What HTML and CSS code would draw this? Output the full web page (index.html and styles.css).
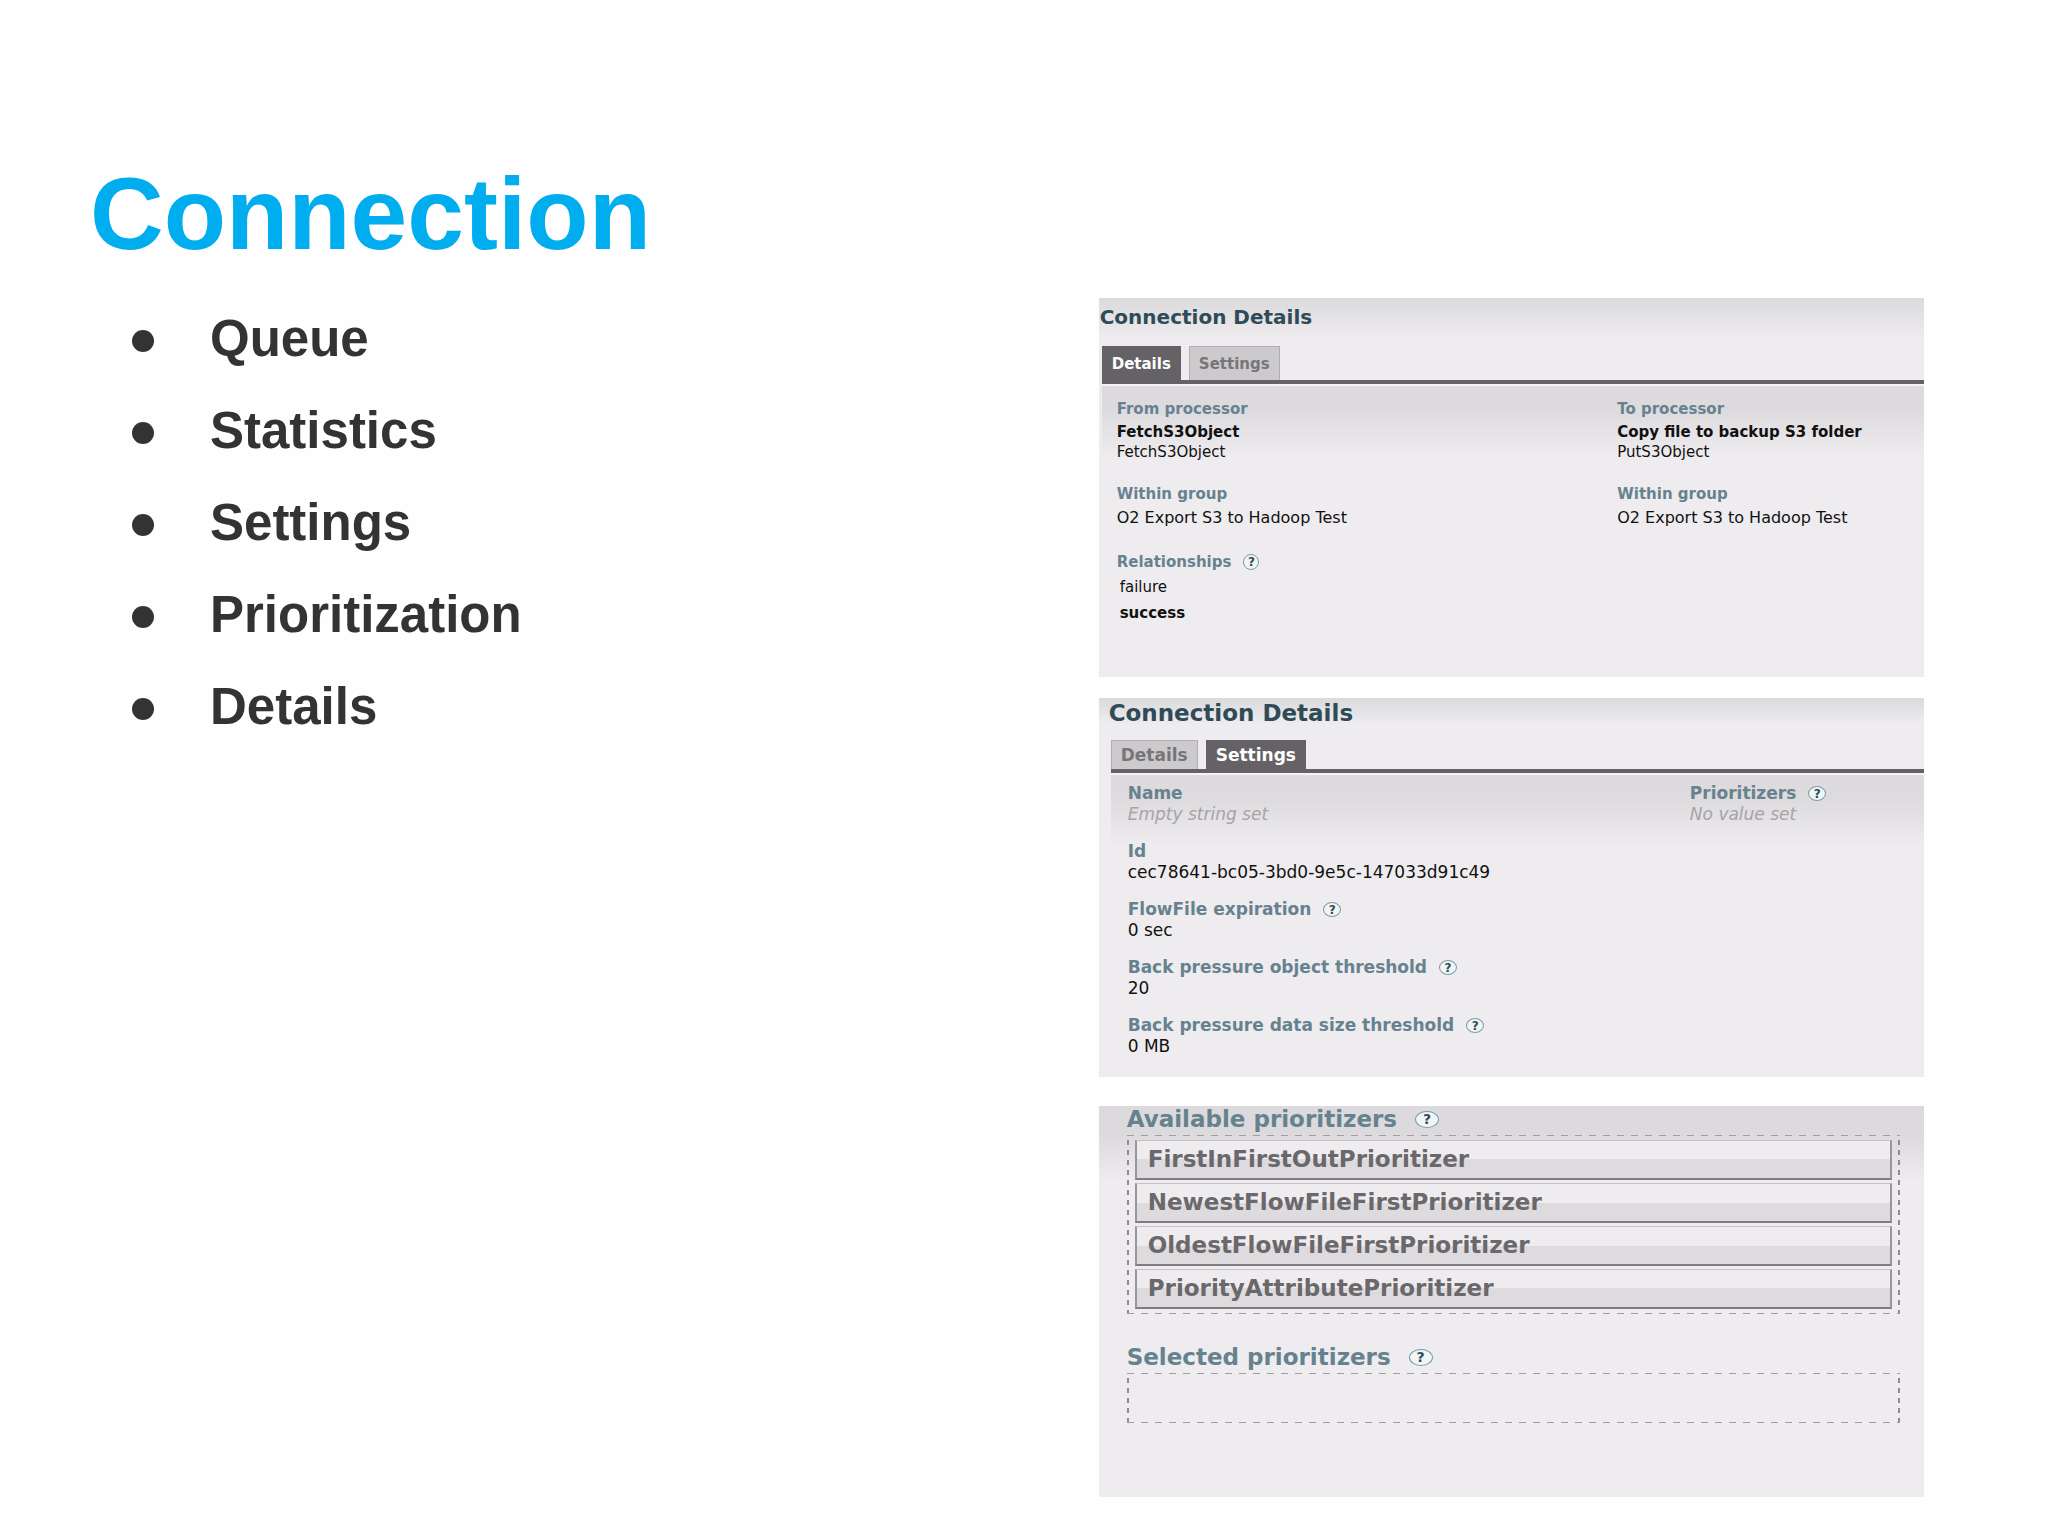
FILE: index.html
```html
<!DOCTYPE html>
<html lang="en">
<head>
    <meta charset="UTF-8">
    <meta name="viewport" content="width=device-width, initial-scale=1.0">
    <title>Connection</title>
    <link rel="stylesheet" href="styles.css">
</head>
<body>
    <h1>Connection</h1>

    <main class="slide">
        <ul class="topics">
            <li>Queue</li>
            <li>Statistics</li>
            <li>Settings</li>
            <li>Prioritization</li>
            <li>Details</li>
        </ul>

        <div class="panels">
            <!-- Details tab -->
            <section class="panel details">
                <h2>Connection Details</h2>
                <div class="tabs" role="tablist">
                    <button class="tab active" role="tab" aria-selected="true">Details</button>
                    <button class="tab" role="tab" aria-selected="false">Settings</button>
                </div>
                <div class="pane">
                    <div class="column">
                        <dl class="field">
                            <dt>From processor</dt>
                            <dd class="strong">FetchS3Object</dd>
                            <dd class="type">FetchS3Object</dd>
                        </dl>
                        <dl class="field">
                            <dt>Within group</dt>
                            <dd>O2 Export S3 to Hadoop Test</dd>
                        </dl>
                        <dl class="field">
                            <dt>Relationships <button class="help">?</button></dt>
                            <dd class="relationship">failure</dd>
                            <dd class="relationship strong">success</dd>
                        </dl>
                    </div>
                    <div class="column">
                        <dl class="field">
                            <dt>To processor</dt>
                            <dd class="strong">Copy file to backup S3 folder</dd>
                            <dd class="type">PutS3Object</dd>
                        </dl>
                        <dl class="field">
                            <dt>Within group</dt>
                            <dd>O2 Export S3 to Hadoop Test</dd>
                        </dl>
                    </div>
                </div>
            </section>

            <!-- Settings tab -->
            <section class="panel settings">
                <h2>Connection Details</h2>
                <div class="tabs" role="tablist">
                    <button class="tab" role="tab" aria-selected="false">Details</button>
                    <button class="tab active" role="tab" aria-selected="true">Settings</button>
                </div>
                <div class="pane">
                    <div class="column">
                        <dl class="field">
                            <dt>Name</dt>
                            <dd class="unset">Empty string set</dd>
                        </dl>
                        <dl class="field">
                            <dt>Id</dt>
                            <dd>cec78641-bc05-3bd0-9e5c-147033d91c49</dd>
                        </dl>
                        <dl class="field">
                            <dt>FlowFile expiration <button class="help">?</button></dt>
                            <dd>0 sec</dd>
                        </dl>
                        <dl class="field">
                            <dt>Back pressure object threshold <button class="help">?</button></dt>
                            <dd>20</dd>
                        </dl>
                        <dl class="field">
                            <dt>Back pressure data size threshold <button class="help">?</button></dt>
                            <dd>0 MB</dd>
                        </dl>
                    </div>
                    <div class="column">
                        <dl class="field">
                            <dt>Prioritizers <button class="help">?</button></dt>
                            <dd class="unset">No value set</dd>
                        </dl>
                    </div>
                </div>
            </section>

            <!-- Prioritizers -->
            <section class="panel prioritizers">
                <h3>Available prioritizers <button class="help">?</button></h3>
                <ul class="dropzone">
                    <li>FirstInFirstOutPrioritizer</li>
                    <li>NewestFlowFileFirstPrioritizer</li>
                    <li>OldestFlowFileFirstPrioritizer</li>
                    <li>PriorityAttributePrioritizer</li>
                </ul>
                <h3>Selected prioritizers <button class="help">?</button></h3>
                <ul class="dropzone"></ul>
            </section>
        </div>
    </main>
</body>
</html>
```
FILE: styles.css
```css
* {
    box-sizing: border-box;
}

body {
    margin: 0;
    padding: 154px 124px 39px 90px;
    background: #fefefe;
    font-family: "Liberation Sans", Arial, sans-serif;
}

h1, h2, h3, ul, dl, dd {
    margin: 0;
    padding: 0;
}

ul {
    list-style: none;
}

h1 {
    margin-bottom: 19px;
    font-size: 102px;
    line-height: 120px;
    color: #00aeef;
}

.slide {
    display: grid;
    grid-template-columns: 11fr 9fr;
}

.topics {
    padding-left: 42px;
    font-size: 51px;
    font-weight: bold;
    line-height: 92px;
    color: #333235;
}

.topics li {
    display: flex;
    align-items: center;
    gap: 56px;
}

.topics li::before {
    content: "";
    width: 22px;
    height: 22px;
    margin-top: 4px;
    border-radius: 50%;
    background: #333235;
}

/* Panels */
.panels {
    display: flex;
    flex-direction: column;
    padding-top: 5px;
    font-family: "DejaVu Sans", Verdana, sans-serif;
}

.panel {
    background: linear-gradient(#dad9db, #eeecef 40px);
}

h2 {
    color: #2f4b57;
}

.tabs {
    display: flex;
    gap: 8px;
    border-bottom: 4px solid #646264;
}

.tab {
    padding: 0 9px;
    border: 1px solid #b0aeb0;
    border-bottom: 0;
    background: #cccacc;
    color: #777578;
    font-family: inherit;
    font-weight: bold;
}

.tab.active {
    border-color: #646264;
    background: #646264;
    color: #fff;
}

.pane {
    display: grid;
    border-top: 2px solid #f4f2f4;
    background: linear-gradient(#dcdadc 0, #dddbde 24px, #eeecef 72px);
}

.column {
    display: flex;
    flex-direction: column;
}

dt {
    display: flex;
    align-items: center;
    font-weight: bold;
    color: #66828f;
}

dd {
    color: #111;
}

.unset {
    font-style: italic;
    color: #a5a3a6;
}

.help {
    display: flex;
    align-items: center;
    justify-content: center;
    padding: 0;
    border: 1px solid #7f9aa5;
    border-radius: 50%;
    background: #f0f5f6;
    color: #2f4b57;
    font-family: inherit;
    font-weight: bold;
    line-height: 1;
}

/* Details */
.details {
    margin-bottom: 21px;
    padding-left: 3px;
}

.details h2 {
    margin-left: -2px;
    padding-top: 4px;
    font-size: 20px;
    line-height: 30px;
}

.details .tabs {
    margin-top: 14px;
}

.details .tab {
    height: 34px;
    font-size: 15px;
}

.details .pane {
    grid-template-columns: 62fr 38fr;
    padding: 11px 0 51px 15px;
}

.details .column {
    gap: 21px;
}

.details dt {
    font-size: 15px;
    line-height: 24px;
}

.details dd {
    font-size: 16px;
    line-height: 23px;
}

.details .strong {
    font-size: 15px;
    font-weight: bold;
}

.details .type {
    font-size: 15px;
    line-height: 17px;
}

.details .relationship {
    padding-left: 3px;
    font-size: 15px;
    line-height: 26px;
}

.details .help {
    width: 16px;
    height: 16px;
    margin-left: 12px;
    font-size: 12px;
}

/* Settings */
.settings {
    margin-bottom: 29px;
    padding-left: 12px;
    background: linear-gradient(#dad9db, #eeecef 26px);
}

.settings h2 {
    margin-left: -2px;
    font-size: 23px;
    line-height: 30px;
}

.settings .tabs {
    margin-top: 12px;
}

.settings .tab {
    height: 29px;
    font-size: 17px;
}

.settings .pane {
    grid-template-columns: 706fr 294fr;
    padding: 8px 0 20px 17px;
}

.settings .column {
    gap: 16px;
}

.settings dt {
    font-size: 17px;
    line-height: 21px;
}

.settings dd {
    font-size: 17px;
    line-height: 21px;
}

.settings .help {
    width: 18px;
    height: 15px;
    margin-left: 12px;
    font-size: 12px;
}

/* Prioritizers */
.prioritizers {
    padding: 1px 24px 74px 28px;
    background: linear-gradient(#dcdadd 28px, #eeecef 76px);
}

.prioritizers h3 {
    display: flex;
    align-items: center;
    font-size: 23px;
    line-height: 24px;
    color: #66828f;
}

.prioritizers .help {
    width: 24px;
    height: 17px;
    margin-left: 18px;
    font-size: 14px;
}

.dropzone {
    display: flex;
    flex-direction: column;
    gap: 3px;
    min-height: 50px;
    margin: 4px 0 31px;
    padding: 5px 8px;
    background:
        repeating-linear-gradient(90deg, #a09ea1 0 7px, transparent 7px 14px) top / 100% 1px no-repeat,
        repeating-linear-gradient(90deg, #a09ea1 0 7px, transparent 7px 14px) bottom / 100% 1px no-repeat,
        repeating-linear-gradient(transparent 0 5px, #8e8c8f 5px 10px) left / 2px 100% no-repeat,
        repeating-linear-gradient(transparent 0 5px, #8e8c8f 5px 10px) right / 2px 100% no-repeat;
}

.dropzone:last-child {
    margin-bottom: 0;
}

.dropzone li {
    padding: 0 11px;
    border: 2px solid #98969a;
    border-top: 1px solid #c4c2c5;
    border-bottom-color: #7e7c7f;
    background: linear-gradient(#eeecef 50%, #dddbde 50%);
    color: #6a686b;
    font-size: 23px;
    font-weight: bold;
    line-height: 37px;
}
```
